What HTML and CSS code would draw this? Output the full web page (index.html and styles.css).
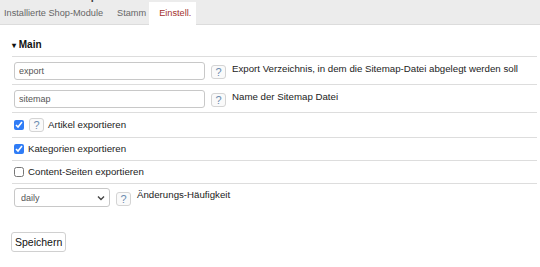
FILE: index.html
```html
<!DOCTYPE html>
<html lang="de">
  <head>
    <meta charset="UTF-8" />
    <title>Einstellungen</title>
    <link rel="stylesheet" href="styles.css">
  </head>
  <body>
    <!-- ======= Tabs ======= -->
    <header class="tabbar">
      <div class="title">
        <div class="title-inner">
          <span class="title-icon"></span>
          <span class="title-text">OxSitemap 1.0.0</span>
        </div>
      </div>
      <ul class="tabs">
        <li><a href="#">Installierte Shop-Module</a></li>
        <li><a href="#">Stamm</a></li>
        <li class="active"><a href="#">Einstell.</a></li>
      </ul>
    </header>

    <!-- ======= Settings ======= -->
    <form class="settings">
      <div class="group-title"><span class="caret">&#9662;</span> Main</div>

      <div class="row">
        <input type="text" class="field" value="export" />
        <button type="button" class="help">?</button>
        <span class="label">Export Verzeichnis, in dem die Sitemap-Datei abgelegt werden soll</span>
      </div>

      <div class="row">
        <input type="text" class="field" value="sitemap" />
        <button type="button" class="help">?</button>
        <span class="label">Name der Sitemap Datei</span>
      </div>

      <div class="row check-row with-help">
        <input type="checkbox" checked />
        <button type="button" class="help">?</button>
        <span class="label">Artikel exportieren</span>
      </div>

      <div class="row check-row">
        <input type="checkbox" checked />
        <span class="label">Kategorien exportieren</span>
      </div>

      <div class="row check-row">
        <input type="checkbox" />
        <span class="label">Content-Seiten exportieren</span>
      </div>

      <div class="row last">
        <select class="select">
          <option>daily</option>
          <option>weekly</option>
          <option>monthly</option>
        </select>
        <button type="button" class="help">?</button>
        <span class="label">Änderungs-Häufigkeit</span>
      </div>

      <button type="button" class="save">Speichern</button>
    </form>
  </body>
</html>
```

FILE: styles.css
```css
/* ======= Base ======= */
body {
  margin: 0;
  font-family: "Liberation Sans", Arial, sans-serif;
  font-size: 10px;
  color: #222;
  background: #fff;
}

/* ======= Tabs ======= */
.tabbar {
  background-color: #ececec;
  border-bottom: 1px solid #dcdcdc;
}

.title {
  height: 2px;
  overflow: hidden;
}

.title-inner {
  display: flex;
  align-items: center;
  gap: 22px;
  height: 12px;
  margin-top: -10px;
  padding-left: 10px;
}

.title-icon {
  display: inline-block;
  width: 8px;
  height: 8px;
  background: #9c6;
}

.title-text {
  font-weight: bold;
  font-size: 11px;
  line-height: 12px;
  color: #444;
}

.tabs {
  list-style: none;
  margin: 0;
  padding: 0;
  display: flex;
  height: 22px;
}

.tabs li a {
  display: block;
  padding: 0 3px 0 11px;
  line-height: 22px;
  color: #666;
  text-decoration: none;
  font-size: 9.2px;
}

.tabs li:first-child a {
  padding-left: 4px;
}

.tabs li.active {
  background: #fff;
  margin-bottom: -1px;
  height: 23px;
}

.tabs li.active a {
  color: #a3312e;
  padding: 0 5px 0 10px;
}

/* ======= Settings ======= */
.settings {
  padding: 14px 3px 0 12px;
}

.group-title {
  font-weight: bold;
  font-size: 10px;
  line-height: 12px;
  padding-bottom: 4px;
  border-bottom: 1px solid #ddd;
  color: #111;
}

.caret {
  font-size: 8px;
}

.row {
  display: flex;
  align-items: flex-start;
  padding: 5px 0 4px 2px;
  border-bottom: 1px solid #ddd;
}

.row.last {
  border-bottom: none;
  padding-top: 4px;
}

.field {
  width: 191px;
  height: 18px;
  box-sizing: border-box;
  border: 1px solid #c8c8c8;
  border-radius: 3px;
  padding: 0 4px;
  font-family: "Liberation Sans", Arial, sans-serif;
  font-size: 9px;
  color: #555;
  margin: 0 6px 0 0;
}

.help {
  width: 15px;
  height: 14px;
  margin: 3px 6px 0 0;
  padding: 0;
  border: 1px solid #d4d4d4;
  border-radius: 3px;
  background: #fafafa;
  color: #6b8bb0;
  font-family: "Liberation Sans", Arial, sans-serif;
  font-size: 11px;
  line-height: 12px;
}

.label {
  font-size: 9.7px;
  line-height: 12px;
  padding-top: 1px;
}

.check-row {
  align-items: center;
  padding: 4px 0 4px 2px;
}

.check-row.with-help {
  padding: 5px 0 5px 2px;
}

.check-row .label {
  padding-top: 0;
  line-height: 14px;
}

.check-row input {
  width: 10px;
  height: 10px;
  margin: 0 4px 0 0;
  accent-color: #2f7cf6;
}

.check-row .help {
  margin: 0 4px 0 1px;
}

.select {
  width: 96px;
  height: 19px;
  appearance: none;
  -webkit-appearance: none;
  border: 1px solid #c8c8c8;
  border-radius: 3px;
  background: #fff url("data:image/svg+xml;utf8,<svg xmlns='http://www.w3.org/2000/svg' width='8' height='6' viewBox='0 0 8 6'><path d='M1 1.5l3 3 3-3' fill='none' stroke='%23444' stroke-width='1.4'/></svg>") no-repeat right 4px center;
  font-family: "Liberation Sans", Arial, sans-serif;
  font-size: 9px;
  color: #555;
  padding: 0 6px;
  margin: 0 6px 0 0;
}

.select + .help {
  margin-top: 4px;
}

.save {
  margin: 21px 0 0 -1px;
  padding: 0 3px;
  height: 20px;
  border: 1px solid #d0d0d0;
  border-radius: 3px;
  background: #fff;
  font-family: "Liberation Sans", Arial, sans-serif;
  font-size: 10.5px;
  color: #111;
}
```
